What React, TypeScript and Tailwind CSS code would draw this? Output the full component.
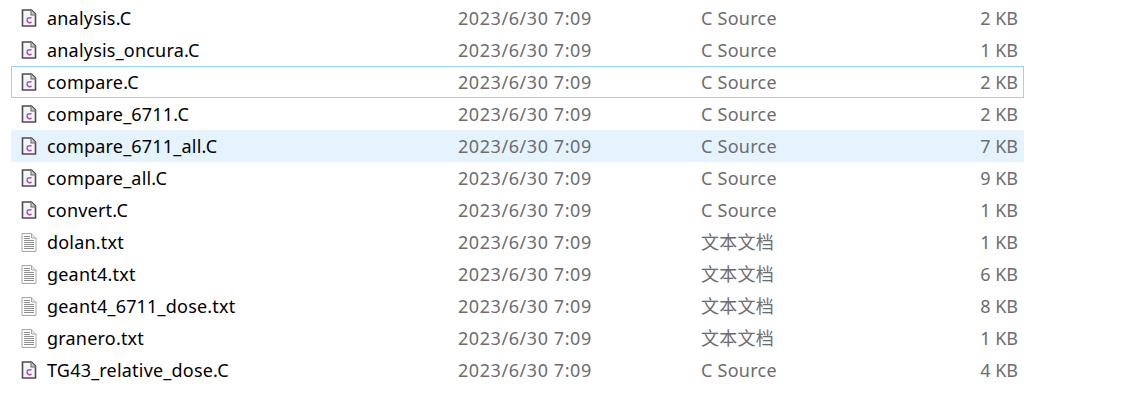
const SOURCE = 'C Source';
const TEXT = '文本文档';

const files = [
  { name: 'analysis.C', type: SOURCE, size: '2 KB' },
  { name: 'analysis_oncura.C', type: SOURCE, size: '1 KB' },
  { name: 'compare.C', type: SOURCE, size: '2 KB', state: 'selected' },
  { name: 'compare_6711.C', type: SOURCE, size: '2 KB' },
  { name: 'compare_6711_all.C', type: SOURCE, size: '7 KB', state: 'hover' },
  { name: 'compare_all.C', type: SOURCE, size: '9 KB' },
  { name: 'convert.C', type: SOURCE, size: '1 KB' },
  { name: 'dolan.txt', type: TEXT, size: '1 KB' },
  { name: 'geant4.txt', type: TEXT, size: '6 KB' },
  { name: 'geant4_6711_dose.txt', type: TEXT, size: '8 KB' },
  { name: 'granero.txt', type: TEXT, size: '1 KB' },
  { name: 'TG43_relative_dose.C', type: SOURCE, size: '4 KB' },
];

function SourceIcon() {
  return (
    <svg width="16" height="18" viewBox="0 0 16 18" fill="none" className="shrink-0">
      <path d="M1.5 1H10.5L14.5 5V17H1.5Z" fill="#f6f5f6" stroke="#4f4b52" strokeWidth="1.6" />
      <path d="M10 1V5.8H14.5" fill="#cfcdd0" stroke="#77737a" strokeWidth="1.2" />
      <path d="M10.5 9.2C9.4 8.3 6.2 8.4 6 11C5.8 13.7 9.2 14.2 10.6 13.1" stroke="#a850bb" strokeWidth="1.5" />
    </svg>
  );
}

function TextIcon() {
  return (
    <svg width="16" height="19" viewBox="0 0 16 19" fill="none" className="shrink-0">
      <path d="M1 .5H10.5L15 5V18.5H1Z" fill="#fcfcfc" stroke="#a8a8a8" strokeWidth="1" />
      <path d="M10.5 .5V5H15" fill="#e8e8e8" stroke="#a8a8a8" strokeWidth="1" />
      <path d="M3 3.5H9M3 5.5H9M3 7.5H13M3 9.5H13M3 11.5H13M3 13.5H13M3 15.5H13" stroke="#8f8f8f" strokeWidth="1" />
    </svg>
  );
}

export default function App() {
  return (
    <div
      className="h-[407px] w-[1136px] overflow-hidden bg-white pt-[2px] pl-[11px] text-[18px] text-[#6d6d6d]"
      style={{ fontFamily: '"Noto Sans", "Noto Sans CJK SC", sans-serif' }}
    >
      {files.map((file) => (
        <div
          key={file.name}
          className={`flex h-8 w-[1013px] items-center border ${
            file.state === 'selected'
              ? 'border-[#99d1ff]'
              : file.state === 'hover'
                ? 'border-transparent bg-[#e5f3ff]'
                : 'border-transparent'
          }`}
        >
          <div className="flex w-[446px] items-center gap-[10px] pl-[9px] tracking-[0.2px] text-black">
            {file.type === SOURCE ? <SourceIcon /> : <TextIcon />}
            <span>{file.name}</span>
          </div>
          <span className="w-[243px] tracking-[0.57px]">2023/6/30 7:09</span>
          <span className="w-[200px] tracking-[0.25px]">{file.type}</span>
          <span className="w-[122px] pr-[5px] text-right">{file.size}</span>
        </div>
      ))}
    </div>
  );
}
